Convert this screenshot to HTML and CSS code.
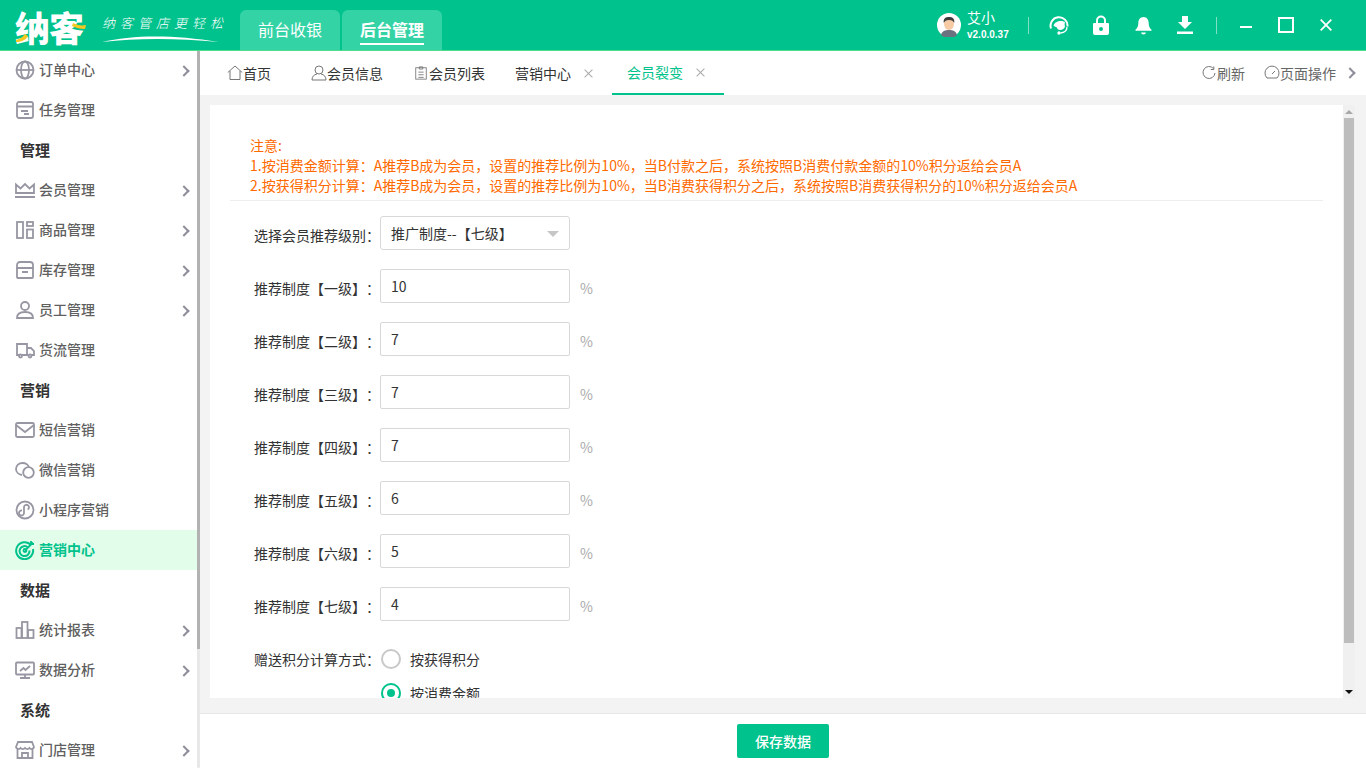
FILE: index.html
```html
<!DOCTYPE html>
<html lang="zh">
<head>
<meta charset="utf-8">
<title>纳客</title>
<link rel="stylesheet" href="styles.css">
</head>
<body>
<div class="app">
  <header class="topbar">
    <div class="brand">
      <span class="logo">纳客<svg class="logo-accent" viewBox="0 0 72 30"><path d="M1 26 C5 25 8 23 10 20 L13 22 C11 26 6 28 1 28Z" fill="#f7c821"/><path d="M58 9 C62 11 66 12 71 11 L70 15 C65 15 61 14 57 12Z" fill="#f7c821"/></svg></span>
      <div class="slogan">
        <span class="slogan-text">纳客管店更轻松</span>
        <svg class="swoosh" viewBox="0 0 118 8"><path d="M0 7 C30 0 70 -1 118 7 C75 3 35 3 0 7Z" fill="#fff"/></svg>
      </div>
    </div>
    <nav class="main-tabs">
      <a class="main-tab">前台收银</a>
      <a class="main-tab active"><span>后台管理</span></a>
    </nav>
    <div class="top-right">
      <svg class="avatar" viewBox="0 0 24 24"><circle cx="12" cy="12" r="12" fill="#fff"/><path d="M4 22c1-4 4-5 8-5s7 1 8 5a12 12 0 0 1-16 0Z" fill="#6a7280"/><ellipse cx="12" cy="11" rx="5" ry="6" fill="#f7caa6"/><path d="M6.800 10C6 5 9 4 12 4s6 1 5.200 6c-1-2-2-3-5.200-3S8 8 6.800 10Z" fill="#3b3b3b"/></svg>
      <div class="user">
        <div class="user-name">艾小</div>
        <div class="user-ver">v2.0.0.37</div>
      </div>
      <i class="vline first"></i>
      <svg class="ti headset" viewBox="0 0 20 20"><path d="M2 13.500A8.500 8.500 0 1 1 18.500 11.500" fill="none" stroke="#fff" stroke-width="2"/><path d="M4.500 10.500C6 7 9 6 12 6c2 0 3.500.5 4 1.500-.5 1-.5 2.500 0 4-.5 2-2.500 3.500-5 3.500-2 0-3-1.500-3.500-3-1 0-2-.5-3-1.500Z" fill="#fff"/><path d="M18 12c0 3-2.500 5.500-6.500 6" fill="none" stroke="#fff" stroke-width="1.300"/><circle cx="10" cy="18" r="1.700" fill="#fff"/></svg>
      <svg class="ti lock" viewBox="0 0 16 20"><path d="M4 9V5.500a4 4 0 0 1 8 0V9" fill="none" stroke="#fff" stroke-width="2"/><path d="M1 8h14a1 1 0 0 1 1 1v9a2 2 0 0 1-2 2H2a2 2 0 0 1-2-2V9a1 1 0 0 1 1-1Zm7 4a2 2 0 1 0 0 4 2 2 0 0 0 0-4Z" fill="#fff" fill-rule="evenodd"/></svg>
      <svg class="ti bell" viewBox="0 0 18 20"><path d="M9 1c3.500 0 5.500 3 5.500 6.500 0 3 1 5 3 7v1H.500v-1c2-2 3-4 3-7C3.500 4 5.500 1 9 1Z" fill="#fff"/><path d="M6.500 17.500h5a2.500 2 0 0 1-5 0Z" fill="#fff"/></svg>
      <svg class="ti down" viewBox="0 0 16 18"><path d="M5 0h6v6h4l-7 7-7-7h4Z" fill="#fff"/><rect y="15.500" width="16" height="2.500" fill="#fff"/></svg>
      <i class="vline second"></i>
      <i class="win-min"></i>
      <i class="win-max"></i>
      <svg class="win-close" viewBox="0 0 12 12"><path d="M.7.7l10.600 10.600M11.300.7.700 11.300" stroke="#fff" stroke-width="1.800" fill="none"/></svg>
    </div>
  </header>

  <div class="body">
    <aside class="side">
      <ul class="menu">
        <li class="item"><svg class="mi" viewBox="0 0 20 20"><circle cx="10" cy="10" r="8.500"/><ellipse cx="10" cy="10" rx="4" ry="8.500"/><path d="M1.500 10h17"/></svg><span>订单中心</span><i class="chev"></i></li>
        <li class="item"><svg class="mi" viewBox="0 0 20 20"><rect x="2" y="2" width="16" height="16" rx="2"/><path d="M2 6.500h16M6 11h7M9 14h5"/></svg><span>任务管理</span></li>
        <li class="head">管理</li>
        <li class="item"><svg class="mi" viewBox="0 0 20 20"><path d="M1 13V4.500l4.500 4L10 4l4.500 4.500L19 4.500V13Z"/><path d="M0 17h20" stroke-width="2"/></svg><span>会员管理</span><i class="chev"></i></li>
        <li class="item"><svg class="mi" viewBox="0 0 20 20"><rect x="2" y="2" width="6" height="16"/><rect x="12" y="2" width="6" height="4"/><rect x="12" y="9.500" width="6" height="8.500"/></svg><span>商品管理</span><i class="chev"></i></li>
        <li class="item"><svg class="mi" viewBox="0 0 20 20"><path d="M2 8V5a3 3 0 0 1 3-3h10a3 3 0 0 1 3 3v3Z"/><path d="M2 8h16v9a1 1 0 0 1-1 1H3a1 1 0 0 1-1-1ZM7 12h6"/></svg><span>库存管理</span><i class="chev"></i></li>
        <li class="item"><svg class="mi" viewBox="0 0 20 20"><circle cx="10" cy="6" r="4"/><path d="M2 18c0-4 3-6 8-6s8 2 8 6Z"/></svg><span>员工管理</span><i class="chev"></i></li>
        <li class="item"><svg class="mi" viewBox="0 0 20 20"><path d="M4 15H2V4h10v11H7M12 8h4l3 3v4h-2M12 15h1"/><circle cx="5.500" cy="16" r="1.500"/><circle cx="15" cy="16" r="1.500"/></svg><span>货流管理</span></li>
        <li class="head">营销</li>
        <li class="item"><svg class="mi" viewBox="0 0 20 20"><rect x="1" y="3" width="18" height="14" rx="1.500"/><path d="M1 5l9 7 9-7"/></svg><span>短信营销</span></li>
        <li class="item"><svg class="mi" viewBox="0 0 20 20"><path d="M7 15C3.500 14.500 1 12 1 9c0-3.500 3-6 6.500-6 3.200 0 6 2 6.500 4.500"/><circle cx="13.500" cy="12.500" r="5.300"/><path d="M11.500 12h.01M15.500 12h.01M5.500 7h.01M9.500 7h.01"/></svg><span>微信营销</span></li>
        <li class="item"><svg class="mi" viewBox="0 0 20 20"><circle cx="10" cy="10" r="8.500"/><path d="M7 10.500a2.500 2.500 0 1 0 2.000 2.500V7a2.500 2.500 0 1 1 3.600 2.500"/></svg><span>小程序营销</span></li>
        <li class="item active"><svg class="mi" viewBox="0 0 20 20"><path d="M16 5a8.500 8.500 0 1 0 2 4" stroke-width="2"/><path d="M13 7.500a5 5 0 1 0 1.500 3" stroke-width="2"/><circle cx="10" cy="10.500" r="1.500"/><path d="M10 10.500L18 2.500M16 1v3h3" stroke-width="1.800"/></svg><span>营销中心</span></li>
        <li class="head">数据</li>
        <li class="item"><svg class="mi" viewBox="0 0 20 20"><rect x="1.500" y="8" width="5" height="10"/><rect x="7" y="2" width="5.500" height="16"/><rect x="13" y="10" width="5.500" height="8"/></svg><span>统计报表</span><i class="chev"></i></li>
        <li class="item"><svg class="mi" viewBox="0 0 20 20"><rect x="1" y="2.500" width="18" height="12" rx="1"/><path d="M10 14.500v3M5 18h10M5 11l3.500-3 2 2L15 6"/></svg><span>数据分析</span><i class="chev"></i></li>
        <li class="head">系统</li>
        <li class="item"><svg class="mi" viewBox="0 0 20 20"><path d="M3 2h14l2 5a2.500 2.500 0 0 1-4.500 1 2.800 2.800 0 0 1-4.500 0 2.800 2.800 0 0 1-4.500 0A2.500 2.500 0 0 1 1 7ZM2.500 9v9h15V9M7 18v-5h6v5"/></svg><span>门店管理</span><i class="chev"></i></li>
      </ul>
      <div class="side-scroll"><div class="side-thumb"></div></div>
    </aside>

    <main class="main">
      <div class="tabs">
        <a class="tab t-home"><svg class="tab-i" viewBox="0 0 16 16"><path d="M.8 7.500L8 1l7.200 6.500M3 6v8.500h10V6"/></svg>首页</a>
        <a class="tab t-info"><svg class="tab-i" viewBox="0 0 16 16"><circle cx="8" cy="5" r="4"/><path d="M1 15c0-3.500 2-5.500 5-6M15 15c0-3.500-2-5.500-5-6M1 15h14"/></svg>会员信息</a>
        <a class="tab t-list"><svg class="tab-i small" viewBox="0 0 14 16"><rect x="1" y="2" width="12" height="13"/><path d="M5 1h4v2.500H5ZM4 7h6M4 10h6M4 13h6"/></svg>会员列表</a>
        <a class="tab t-mkt">营销中心<i class="x"></i></a>
        <a class="tab t-cur">会员裂变<i class="x"></i></a>
        <div class="tab-right">
          <a class="ta t-refresh"><svg class="tab-i small" viewBox="0 0 14 14"><path d="M11.500 2.500A6 6 0 1 0 13 7M11.800 .5v3h-3"/></svg>刷新</a>
          <a class="ta t-page"><svg class="tab-i" viewBox="0 0 16 16"><path d="M3 13A7 7 0 1 1 13 13ZM8 9l3-3"/></svg>页面操作</a>
          <i class="chev tabs-chev"></i>
        </div>
      </div>

      <div class="content">
        <section class="card">
          <div class="card-body">
            <div class="notes">
              <p>注意:</p>
              <p>1.按消费金额计算：A推荐B成为会员，设置的推荐比例为10%，当B付款之后，系统按照B消费付款金额的10%积分返给会员A</p>
              <p>2.按获得积分计算：A推荐B成为会员，设置的推荐比例为10%，当B消费获得积分之后，系统按照B消费获得积分的10%积分返给会员A</p>
            </div>
            <form class="form">
              <div class="row">
                <label>选择会员推荐级别<span class="colon">：</span></label>
                <div class="field select">推广制度--【七级】<i class="caret"></i></div>
              </div>
              <div class="row"><label>推荐制度【一级】<span class="colon">：</span></label><div class="field">10</div><span class="pct">%</span></div>
              <div class="row"><label>推荐制度【二级】<span class="colon">：</span></label><div class="field">7</div><span class="pct">%</span></div>
              <div class="row"><label>推荐制度【三级】<span class="colon">：</span></label><div class="field">7</div><span class="pct">%</span></div>
              <div class="row"><label>推荐制度【四级】<span class="colon">：</span></label><div class="field">7</div><span class="pct">%</span></div>
              <div class="row"><label>推荐制度【五级】<span class="colon">：</span></label><div class="field">6</div><span class="pct">%</span></div>
              <div class="row"><label>推荐制度【六级】<span class="colon">：</span></label><div class="field">5</div><span class="pct">%</span></div>
              <div class="row"><label>推荐制度【七级】<span class="colon">：</span></label><div class="field">4</div><span class="pct">%</span></div>
              <div class="radio-row">
                <label>赠送积分计算方式<span class="colon">：</span></label>
                <div class="radios">
                  <div class="radio"><i class="dot"></i>按获得积分</div>
                  <div class="radio on"><i class="dot"></i>按消费金额</div>
                </div>
              </div>
            </form>
          </div>
          <div class="scrollbar">
            <i class="arrow-up"></i>
            <div class="thumb"></div>
            <i class="arrow-down"></i>
          </div>
        </section>
      </div>

      <footer class="footer"><button class="save" type="button">保存数据</button></footer>
    </main>
  </div>
</div>
</body>
</html>
```
FILE: styles.css
```css
* { box-sizing: border-box; margin: 0; padding: 0; }
html, body { width: 1366px; height: 768px; overflow: hidden; }
body { font-family: "Noto Sans CJK SC", "Liberation Sans", sans-serif; font-size: 14px; color: #333; background: #fff; text-spacing-trim: space-all; }
i { display: block; font-style: normal; }
ul { list-style: none; }
.app { display: flex; flex-direction: column; height: 768px; }

.topbar { height: 51px; flex: none; display: flex; background: #00c28c; border-bottom: 1px solid #4fdc8f; }
.brand { width: 240px; display: flex; padding-left: 15px; }
.logo { position: relative; width: 72px; height: 50px; font-size: 35px; line-height: 54px; font-weight: 900; color: #fff; letter-spacing: -1px; white-space: nowrap; }
.logo-accent { position: absolute; left: 0; top: 14px; width: 72px; height: 30px; }
.slogan { margin-left: 15px; display: flex; flex-direction: column; padding-top: 12px; }
.slogan-text { font-size: 13px; line-height: 22px; letter-spacing: 5px; font-style: italic; color: #fff; white-space: nowrap; width: 125px; font-weight: 300; }
.swoosh { width: 117px; height: 8px; margin-top: 1px; }
.main-tabs { display: flex; gap: 2px; padding-top: 10px; }
.main-tab { width: 100px; height: 40px; background: #34d3a6; border-radius: 6px 6px 0 0; color: #fff; font-size: 16px; line-height: 39px; text-align: center; }
.main-tab.active { font-weight: 700; }
.main-tab.active span { display: inline-block; vertical-align: top; height: 35px; line-height: 39px; border-bottom: 2px solid #fff; }
.top-right { margin-left: 495px; display: flex; align-items: center; height: 50px; }
.avatar { width: 24px; height: 24px; flex: none; }
.user { margin-left: 6px; width: 61px; color: #fff; }
.user-name { font-size: 14px; line-height: 16px; }
.user-ver { font-size: 10px; line-height: 14px; margin-top: 3px; font-family: "Liberation Sans", sans-serif; font-weight: 700; }
.vline { width: 1px; height: 17px; background: #7fe0c5; flex: none; }
.ti { flex: none; }
.headset { width: 20px; height: 20px; margin-left: 20px; }
.lock { width: 16px; height: 20px; margin-left: 24px; }
.bell { width: 17px; height: 19px; margin-left: 26px; }
.down { width: 16px; height: 18px; margin-left: 25px; }
.second { margin-left: 23px; }
.win-min { width: 12px; height: 2px; background: #fff; margin: 4px 0 0 23px; }
.win-max { width: 16px; height: 16px; border: 2px solid #fff; margin-left: 26px; }
.win-close { width: 12px; height: 12px; margin-left: 26px; }

.body { flex: 1; display: flex; min-height: 0; }
.side { width: 200px; flex: none; display: flex; background: #fff; overflow: hidden; }
.menu { width: 197px; flex: none; margin-top: -1px; }
.item, .head { height: 40px; display: flex; align-items: center; }
.item { padding: 0 6px 0 15px; color: #5f5f5f; font-weight: 500; font-size: 14px; position: relative; }
.item span { margin-left: 4px; flex: 1; line-height: 20px; padding-bottom: 2px; }
.head { padding: 0 0 2px 20px; color: #333; font-weight: 700; font-size: 15px; }
.item.active { background: #e2fde9; color: #00c28c; font-weight: 700; }
.mi { width: 20px; height: 20px; flex: none; fill: none; stroke: #9797a3; stroke-width: 1.800; }
.item.active .mi { stroke: #00c28c; }
.chev { width: 8px; height: 8px; border-top: 2px solid #8f8f9b; border-right: 2px solid #8f8f9b; transform: rotate(45deg); flex: none; margin: 2px 3px 0 0; }
.side-scroll { width: 3px; height: 717px; background: #e8e8e8; border-radius: 2px; }
.side-thumb { height: 598px; background: #b2b2b2; }

.main { flex: 1; display: flex; flex-direction: column; min-width: 0; }
.tabs { height: 44px; flex: none; display: flex; align-items: stretch; color: #333; font-size: 14px; line-height: 46px; white-space: nowrap; }
.tab { display: flex; align-items: center; position: relative; }
.tab-i { width: 16px; height: 16px; flex: none; fill: none; stroke: #777; stroke-width: 1; }
.tab-i.small { width: 14px; height: 14px; margin-right: 1px; }
.t-home { margin-left: 27px; }
.t-info { margin-left: 40px; }
.t-list { margin-left: 31px; }
.t-mkt { margin-left: 30px; }
.t-cur { margin-left: 18px; padding: 0 18px 0 15px; color: #00c28c; border-bottom: 2px solid #00c28c; }
.x { position: relative; width: 11px; height: 11px; margin-left: 12px; flex: none; }
.x::before, .x::after { content: ""; position: absolute; left: 5px; top: 0; width: 1px; height: 11px; background: #aaa; }
.x::before { transform: rotate(45deg); }
.x::after { transform: rotate(-45deg); }
.tab-right { margin-left: auto; display: flex; align-items: center; color: #666; padding-right: 12px; }
.ta { display: flex; align-items: center; }
.t-refresh { margin-right: 19px; }
.tabs-chev { margin: 0 0 0 10px; }

.content { flex: 1; min-height: 0; background: #f3f3f3; padding: 10px 11px 15px 10px; }
.card { height: 593px; background: #fff; display: flex; overflow: hidden; }
.card-body { flex: 1; min-width: 0; overflow: hidden; padding: 30px 20px 0; }
.notes { border-bottom: 1px solid #eee; padding: 0 0 5px 20px; color: #ff6a00; line-height: 20px; }
.form { padding-top: 15px; }
.row, .radio-row { display: flex; }
.row { height: 34px; margin-bottom: 19px; }
.row label, .radio-row label { width: 150px; text-align: right; color: #333; line-height: 38px; white-space: nowrap; font-size: 14px; }
.colon { font-family: "Noto Sans CJK TC", sans-serif; }
.field { width: 190px; height: 34px; border: 1px solid #d8d8d8; border-radius: 2px; padding-left: 10px; line-height: 32px; color: #333; background: #fff; position: relative; }
.select { border-radius: 3px; }
.caret { position: absolute; right: 10px; top: 14px; border: 6px solid transparent; border-top-color: #c6c6c6; border-bottom-width: 0; }
.pct { margin-left: 10px; color: #aaa; line-height: 38px; }
.radio-row { margin-top: 28px; }
.radio-row label { line-height: 20px; }
.radios { display: flex; flex-direction: column; gap: 14px; margin-left: 1px; }
.radio { display: flex; align-items: center; height: 20px; line-height: 24px; color: #333; }
.dot { width: 20px; height: 20px; border: 2px solid #c8c8c8; border-radius: 50%; margin-right: 9px; position: relative; flex: none; }
.radio.on .dot { border-color: #00c28c; }
.radio.on .dot::after { content: ""; position: absolute; left: 4px; top: 4px; width: 8px; height: 8px; border-radius: 50%; background: #00c28c; }
.scrollbar { width: 12px; flex: none; background: #f0f0f0; display: flex; flex-direction: column; align-items: center; }
.arrow-up { flex: none; margin: 5px 0 4px; border: 4px solid transparent; border-bottom: 4px solid #a8a8a8; border-top-width: 0; }
.thumb { width: 10px; height: 525px; background: #bdbdbd; }
.arrow-down { flex: none; margin-top: auto; margin-bottom: 4px; border: 4px solid transparent; border-top: 4px solid #111; border-bottom-width: 0; }

.footer { height: 55px; flex: none; background: #fff; border-top: 1px solid #e8e8e8; display: flex; justify-content: center; padding: 10px 0 0 0; }
.save { width: 92px; height: 34px; background: #00c28c; color: #fff; border: 0; border-radius: 2px; font: 500 14px "Noto Sans CJK SC", sans-serif; }
```
